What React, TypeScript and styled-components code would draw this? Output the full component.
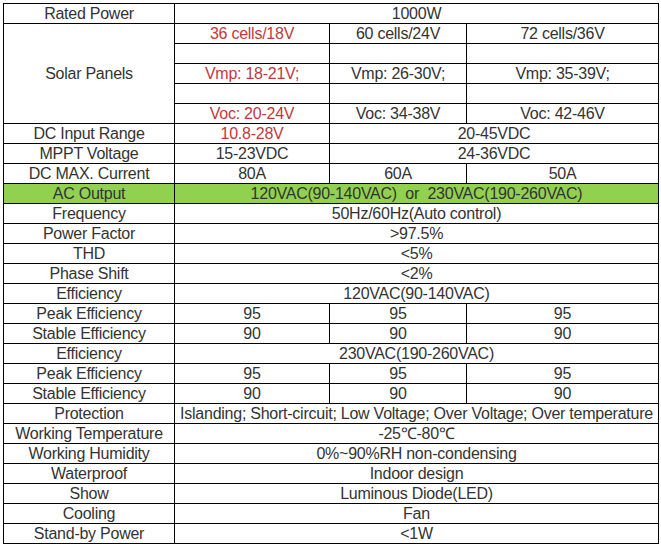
import React from "react";
import styled, { createGlobalStyle } from "styled-components";

const Global = createGlobalStyle`
  html, body { margin: 0; padding: 0; background: #ffffff; }
  body { font-family: "Liberation Sans", Arial, sans-serif; }
`;

const Page = styled.div`
  padding: 3px 0 0 3px;
`;

const Table = styled.table`
  border-collapse: collapse;
  table-layout: fixed;
  width: 655px;
  font-family: "Liberation Sans", Arial, sans-serif;
  font-size: 16px;
  letter-spacing: -0.25px;
  color: #333333;
`;

const Row = styled.tr<{ $green?: boolean }>`
  height: 20px;
  background: ${(p) => (p.$green ? "#92d050" : "transparent")};
`;

const Cell = styled.td<{ $red?: boolean }>`
  border: 1px solid #000000;
  padding: 1px 0 0 0;
  height: 18px;
  line-height: 18px;
  text-align: center;
  vertical-align: middle;
  white-space: pre;
  overflow: visible;
  color: ${(p) => (p.$red ? "#c3383c" : "#333333")};
`;

type Spec = { label: string; values: (string | { t: string; red?: boolean })[]; green?: boolean };

const rows: Spec[] = [
  { label: "DC Input Range", values: [{ t: "10.8-28V", red: true }, "20-45VDC|2"] },
  { label: "MPPT Voltage", values: ["15-23VDC", "24-36VDC|2"] },
  { label: "DC MAX. Current", values: ["80A", "60A", "50A"] },
  { label: "AC Output", values: ["120VAC(90-140VAC)  or  230VAC(190-260VAC)|3"], green: true },
  { label: "Frequency", values: ["50Hz/60Hz(Auto control)|3"] },
  { label: "Power Factor", values: [">97.5%|3"] },
  { label: "THD", values: ["<5%|3"] },
  { label: "Phase Shift", values: ["<2%|3"] },
  { label: "Efficiency", values: ["120VAC(90-140VAC)|3"] },
  { label: "Peak Efficiency", values: ["95", "95", "95"] },
  { label: "Stable Efficiency", values: ["90", "90", "90"] },
  { label: "Efficiency", values: ["230VAC(190-260VAC)|3"] },
  { label: "Peak Efficiency", values: ["95", "95", "95"] },
  { label: "Stable Efficiency", values: ["90", "90", "90"] },
  { label: "Protection", values: ["Islanding; Short-circuit; Low Voltage; Over Voltage; Over temperature|3"] },
  { label: "Working Temperature", values: ["-25℃-80℃|3"] },
  { label: "Working Humidity", values: ["0%~90%RH non-condensing|3"] },
  { label: "Waterproof", values: ["Indoor design|3"] },
  { label: "Show", values: ["Luminous Diode(LED)|3"] },
  { label: "Cooling", values: ["Fan|3"] },
  { label: "Stand-by Power", values: ["<1W|3"] },
];

const solar: { t: string; red?: boolean }[][] = [
  [{ t: "36 cells/18V", red: true }, { t: "60 cells/24V" }, { t: "72 cells/36V" }],
  [{ t: "" }, { t: "" }, { t: "" }],
  [{ t: "Vmp: 18-21V;", red: true }, { t: "Vmp: 26-30V;" }, { t: "Vmp: 35-39V;" }],
  [{ t: "" }, { t: "" }, { t: "" }],
  [{ t: "Voc: 20-24V", red: true }, { t: "Voc: 34-38V" }, { t: "Voc: 42-46V" }],
];

function renderValue(v: string | { t: string; red?: boolean }, i: number) {
  const item = typeof v === "string" ? { t: v } : v;
  const [text, span] = item.t.split("|");
  return (
    <Cell key={i} colSpan={span ? Number(span) : 1} $red={item.red}>
      {text}
    </Cell>
  );
}

export default function App() {
  return (
    <>
      <Global />
      <Page>
        <Table>
          <colgroup>
            <col style={{ width: 171 }} />
            <col style={{ width: 155 }} />
            <col style={{ width: 137 }} />
            <col style={{ width: 192 }} />
          </colgroup>
          <tbody>
            <Row>
              <Cell>Rated Power</Cell>
              <Cell colSpan={3}>1000W</Cell>
            </Row>
            {solar.map((r, ri) => (
              <Row key={`s${ri}`}>
                {ri === 0 && <Cell rowSpan={5}>Solar Panels</Cell>}
                {r.map((c, ci) => (
                  <Cell key={ci} $red={c.red}>
                    {c.t}
                  </Cell>
                ))}
              </Row>
            ))}
            {rows.map((r, ri) => (
              <Row key={ri} $green={r.green}>
                <Cell>{r.label}</Cell>
                {r.values.map(renderValue)}
              </Row>
            ))}
          </tbody>
        </Table>
      </Page>
    </>
  );
}
